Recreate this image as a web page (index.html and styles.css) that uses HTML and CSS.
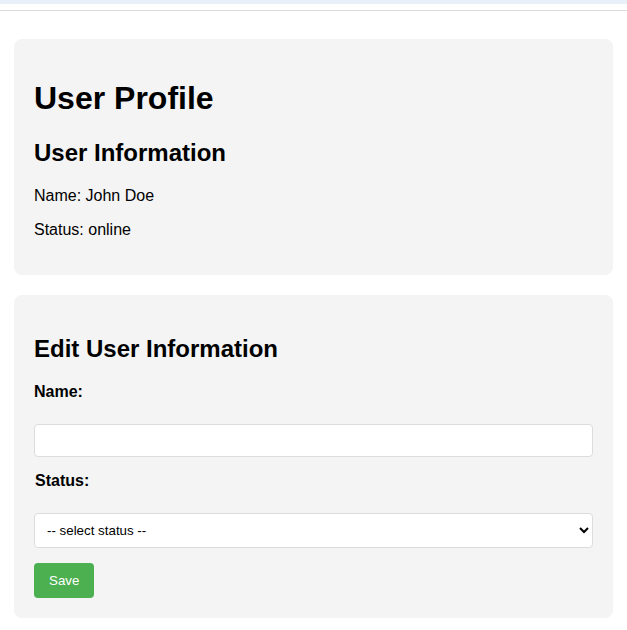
FILE: index.html
```html
<!DOCTYPE html>
<html lang="en">
<head>
<meta charset="utf-8">
<title>User Profile</title>
<link rel="stylesheet" href="styles.css">
</head>
<body>
<div class="topbar"></div>
<div class="topline"></div>
<main class="page">
  <section class="card">
    <h1>User Profile</h1>
    <h2>User Information</h2>
    <p>Name: John Doe</p>
    <p>Status: online</p>
  </section>
  <section class="card">
    <h2>Edit User Information</h2>
    <form class="form">
      <label class="label" for="name">Name:</label>
      <input class="input" id="name" type="text">
      <label class="label label-status" for="status">Status:</label>
      <select class="select" id="status">
        <option>-- select status --</option>
        <option>online</option>
        <option>offline</option>
        <option>away</option>
      </select>
      <button class="btn" type="button">Save</button>
    </form>
  </section>
</main>
</body>
</html>
```
FILE: styles.css
```css
html, body {
  margin: 0;
  padding: 0;
  background: #ffffff;
  font-family: "Liberation Sans", Arial, sans-serif;
  color: #000;
}
.topbar {
  height: 4px;
  background: #e8f0f9;
}
.topline {
  height: 6px;
  border-bottom: 1px solid #dcdcdc;
}
.page {
  padding: 28px 14px 0;
}
.card {
  background: #f4f4f4;
  border-radius: 8px;
  padding: 20px;
  margin-bottom: 20px;
  display: flow-root;
}
h1 {
  font-size: 32px;
  margin: 21.44px 0;
}
h2 {
  font-size: 24px;
  margin: 19.92px 0;
}
p {
  font-size: 16px;
  margin: 16px 0;
}
.form {
  display: flex;
  flex-direction: column;
  align-items: flex-start;
}
.label {
  font-weight: bold;
  font-size: 16px;
  line-height: 18px;
  margin-bottom: 23px;
}
.label-status {
  margin-left: 1px;
  margin-top: 1px;
}
.input {
  width: 100%;
  box-sizing: border-box;
  height: 33px;
  border: 1px solid #dcdcdc;
  border-radius: 4px;
  background: #fff;
  padding: 8px;
  margin: 0 0 14px;
  font-family: "Liberation Sans", Arial, sans-serif;
  font-size: 13.33px;
}
.select {
  width: 100%;
  box-sizing: border-box;
  height: 35px;
  border: 1px solid #dcdcdc;
  border-radius: 4px;
  background: #fff;
  padding: 0 8px;
  margin: 0 0 15px;
  font-family: "Liberation Sans", Arial, sans-serif;
  font-size: 13.33px;
  color: #000;
}
.btn {
  background: #4caf50;
  color: #fff;
  border: none;
  border-radius: 4px;
  padding: 10px 15px;
  height: 35px;
  font-family: "Liberation Sans", Arial, sans-serif;
  font-size: 13.33px;
  cursor: pointer;
}
```
